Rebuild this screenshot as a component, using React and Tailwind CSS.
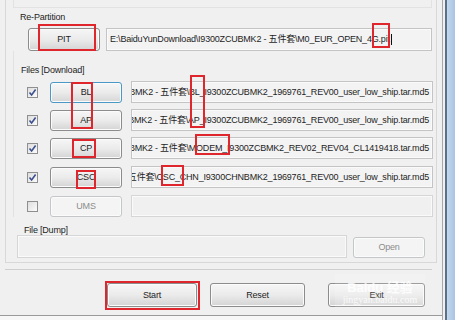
import React from 'react';

const FONT = "font-['Liberation_Sans',_'Noto_Sans_CJK_SC',_sans-serif]";
const DIR = 'E:\\BaiduYunDownload\\I9300ZCUBMK2 - 五件套\\';

function WinButton({ children, className = '', disabled, focused }) {
    const look = disabled
        ? 'border-[#c4c6c8] bg-[#f4f4f4] text-[#8c8c8c]'
        : focused
          ? 'border-[#4a98c6] bg-gradient-to-b from-[#f6f6f6] via-[#ebebeb] to-[#d6d6d6] text-[#1e1e1e]'
          : 'border-[#8c8c8c] bg-gradient-to-b from-[#f6f6f6] via-[#ebebeb] to-[#d4d4d4] text-[#1e1e1e]';
    return (
        <div className={`flex shrink-0 items-center justify-center rounded-[3px] border shadow-[inset_0_0_0_1px_#fbfbfb] ${look} ${className}`}>
            {children}
        </div>
    );
}

function TextBox({ children, className = '', alignEnd = true, disabled }) {
    return (
        <div
            className={`flex shrink-0 items-center overflow-hidden whitespace-nowrap border shadow-[inset_0_0_0_1px_#fafafa] ${
                disabled ? 'border-[#d6d6d6] bg-[#f0f0f0]' : 'border-[#c4c4c4] bg-[#f3f3f3]'
            } ${alignEnd ? 'justify-end pr-[3px]' : 'justify-start pl-[3px]'} ${className}`}
        >
            {children}
        </div>
    );
}

function CheckBox({ checked }) {
    return (
        <div className="flex h-[11px] w-[11px] shrink-0 items-center justify-center border border-[#8f8f8f] bg-gradient-to-br from-[#dedede] to-[#fbfbfb]">
            {checked && (
                <svg width="9" height="9" viewBox="0 0 9 9">
                    <path d="M1.5 4.5 L3.6 7 L7.6 1.6" fill="none" stroke="#3b4f8f" strokeWidth="1.6" />
                </svg>
            )}
        </div>
    );
}

function FileRow({ label, path, checked = true, focused, disabled, className = '' }) {
    return (
        <div className={`flex h-[22px] items-center ${className}`}>
            <div className="ml-[13px]">
                <CheckBox checked={checked} />
            </div>
            <WinButton className="ml-[12px] h-[21px] w-[72px]" focused={focused} disabled={disabled}>
                {label}
            </WinButton>
            <TextBox className="ml-[9px] h-[22px] w-[302px]" disabled={disabled}>
                {path}
            </TextBox>
        </div>
    );
}

// red annotation frames drawn over the dialog
const marks = [
    'left-[38px] top-[24px] w-[58px] h-[27px]',
    'left-[372px] top-[23px] w-[18px] h-[25px]',
    'left-[71px] top-[82px] w-[22px] h-[47px]',
    'left-[190px] top-[75px] w-[15px] h-[53px]',
    'left-[72px] top-[139px] w-[24px] h-[19px]',
    'left-[195px] top-[134px] w-[35px] h-[21px]',
    'left-[76px] top-[170px] w-[20px] h-[19px]',
    'left-[161px] top-[165px] w-[23px] h-[21px]',
    'left-[105px] top-[281px] w-[95px] h-[29px]',
];

export default function App() {
    return (
        <div className={`relative flex h-[320px] w-[455px] overflow-hidden bg-[#f0f0f0] text-[9px] leading-none tracking-[-0.2px] text-[#1e1e1e] ${FONT}`}>
            <div className="flex w-[442px] flex-col">
                {/* Tab panel */}
                <div className="ml-[5px] flex h-[263px] w-[432px] flex-col border-b border-l border-r border-[#d8d8d8]">
                    <div className="ml-[7px] h-[8px] w-[419px] border-b border-l border-r border-[#e2e2e2]" />

                    {/* Re-Partition */}
                    <div className="ml-[7px] flex flex-col">
                        <div className="mt-[4px] h-[11px] pl-[7px] leading-[11px]">Re-Partition</div>
                        <div className="mt-[5px] flex h-[23px] items-center">
                            <WinButton className="ml-[15px] h-[23px] w-[72px]">PIT</WinButton>
                            <TextBox className="ml-[6px] h-[23px] w-[326px]" alignEnd={false}>
                                {DIR}M0_EUR_OPEN_4G.pit
                                <span className="ml-[1px] inline-block h-[11px] w-px bg-[#111]" />
                            </TextBox>
                        </div>
                    </div>

                    {/* Files [Download] */}
                    <div className="ml-[7px] flex flex-col border-l border-[#e2e2e2]">
                        <div className="mt-[14px] h-[11px] pl-[7px] leading-[11px]">Files [Download]</div>
                        <FileRow className="mt-[5px]" label="BL" focused path={`${DIR}BL_I9300ZCUBMK2_1969761_REV00_user_low_ship.tar.md5`} />
                        <FileRow className="mt-[6px]" label="AP" path={`${DIR}AP_I9300ZCUBMK2_1969761_REV00_user_low_ship.tar.md5`} />
                        <FileRow className="mt-[6px]" label="CP" path={`${DIR}MODEM_I9300ZCBMK2_REV02_REV04_CL1419418.tar.md5`} />
                        <FileRow className="mt-[7px]" label="CSC" path={`${DIR}CSC_CHN_I9300CHNBMK2_1969761_REV00_user_low_ship.tar.md5`} />
                        <FileRow className="mt-[7px]" label="UMS" checked={false} disabled path="" />
                    </div>

                    {/* File [Dump] */}
                    <div className="ml-[7px] flex flex-col">
                        <div className="mt-[9px] h-[9px] pl-[11px] leading-[9px]">File [Dump]</div>
                        <div className="flex items-start">
                            <TextBox className="ml-[4px] h-[23px] w-[330px]" disabled />
                            <WinButton className="ml-[6px] mt-[2px] h-[21px] w-[72px]" disabled>
                                Open
                            </WinButton>
                        </div>
                    </div>
                </div>

                <div className="ml-[5px] mt-[6px] h-px w-[427px] bg-[#cfcfcf]" />

                {/* Bottom buttons */}
                <div className="mt-[13px] flex h-[24px] items-center">
                    <WinButton className="ml-[107px] h-[24px] w-[90px]">Start</WinButton>
                    <WinButton className="ml-[13px] h-[24px] w-[95px]">Reset</WinButton>
                    <WinButton className="ml-[23px] h-[24px] w-[97px]">Exit</WinButton>
                </div>

                <div className="mt-[8px] h-px w-full bg-[#9a9a9a]" />
                <div className="flex-1 bg-[#f7f7f7]" />
            </div>

            {/* window frame */}
            <div className="w-[3px] border-l border-[#a8a8a8] bg-[#f0f0f0]" />
            <div className="flex-1 border-l-2 border-[#5b6f87] bg-gradient-to-r from-[#c4d8ee] to-[#a9c4e2]" />

            {marks.map((m) => (
                <div key={m} className={`absolute border-2 border-[#e0262d] ${m}`} />
            ))}

            {/* site watermark */}
            <div className="absolute left-[335px] top-[274px] flex h-[34px] w-[90px] flex-col items-center justify-end bg-white/15 pb-[3px] tracking-normal text-white/80">
                <div className="text-[13px] font-bold leading-[13px]">Baidu 经验</div>
                <div className="font-['Liberation_Serif',_serif] text-[10px] leading-[11px]">jingyan.baidu.com</div>
            </div>
        </div>
    );
}
